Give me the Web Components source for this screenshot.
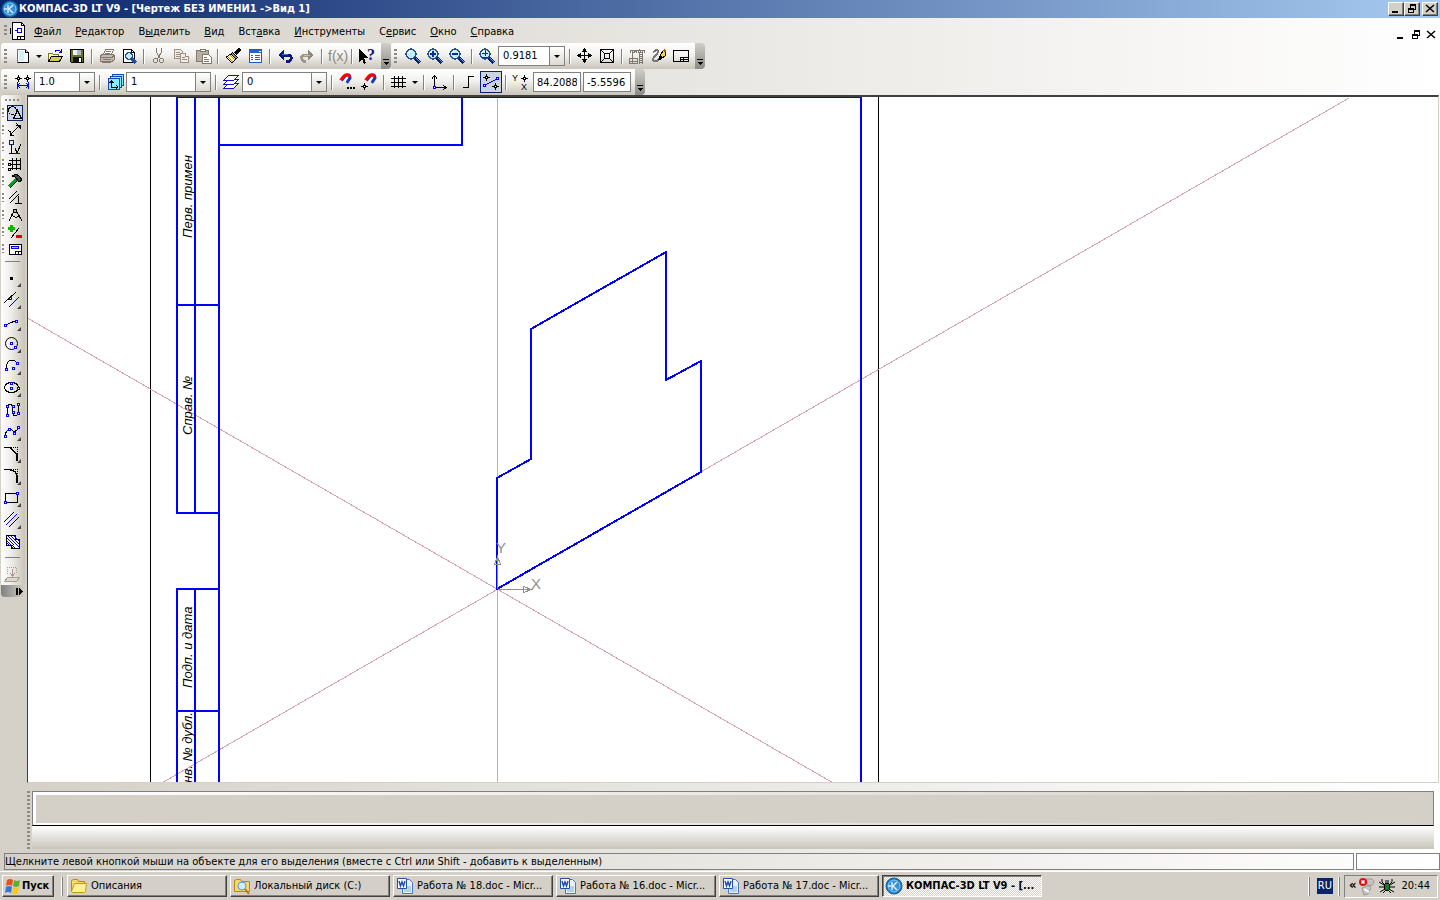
<!DOCTYPE html>
<html lang="ru">
<head>
<meta charset="utf-8">
<title>КОМПАС-3D LT V9</title>
<style>
  :root {
    --face: #d4d0c8;
    --shadow: #808080;
    --dark: #404040;
    --navy: #0a246a;
    --bar: linear-gradient(#ffffff, #f3f2ef 45%, #c9c5bb);
    --window: linear-gradient(90deg, #d4d0c8, #ffffff);
  }
  body {
    margin: 0;
    font: 11px/14px "DejaVu Sans Condensed", "DejaVu Sans", sans-serif;
    color: #000;
  }
</style>
</head>
<body>
<cad-window></cad-window>

<script>
/**
 * Icon set, each drawn on an 18x18 grid
 */
const LENS = `<path d="M11 11l5 5" stroke="#0a246a" stroke-width="3"/><path d="M12 11l4 4" stroke="#5aa0e0"/>
  <circle cx="7" cy="7" r="5" fill="#c4ecff" stroke="#24508c" stroke-width="1.5"/><path d="M4 6q1-2 3-2" stroke="#fff"/>`;
const node = (x, y) => `<rect x="${x - 1}.5" y="${y - 1}.5" width="2" height="2" fill="#fff" stroke="#00f"/>`;
const PLUS = (x, y) => `<path d="M${x - 3} ${y}.5h7M${x}.5 ${y - 3}v7"/><path fill="#fff" d="M${x - 1}.5 ${y - 1}.5h2v2h-2z"/>`;

const ICONS = {
  kompas: `<g shape-rendering="auto"><circle cx="9" cy="9" r="8" fill="#1878c0" stroke="#0e5c9c"/>
    <circle cx="9" cy="9" r="6" fill="#3492d8" stroke="#8cc8f4"/>
    <path d="M7 5v8M12 5L8 9l4 4M3 9h3" stroke="#d8f0ff" stroke-width="1.5"/></g>`,
  sheet: `<path d="M3.5.5h9l3 3v14h-12z" fill="#fff"/><path d="M12.5.5v3h3"/><path d="M5.5 8.5h3m4-2v4m-4-4h4v4h-4z" stroke="#00f"/>
    <path d="M1.5 6v6M8.5 17v-3h7M11.5 14.5v2"/>`,
  new: `<path d="M3.5 2.5h8l3 3v10h-11z" fill="#f6fbff" stroke="#6e6e6e"/><path d="M11.5 2.5v3h3v10h-11"/><path d="M5 4h5v10H5z" fill="#d6eef8" stroke="none"/>`,
  open: `<path d="M2.5 14.5v-8h4l1 1h5v2" fill="#fff6a8" stroke="#77742c"/><path d="M2.5 14.5l3-5h11l-3 5z" fill="#d0ce50"/>
    <path d="M9 4.5q3-3 6 0M15.5 2v3h-3" stroke="#00f"/>`,
  save: `<path d="M2.5 2.5h13v13h-12l-1-1z" fill="#6c7024"/><path d="M5 3h8v5H5z" fill="#e8f4ff" stroke="none"/>
    <path d="M9 3h4v5H9z" fill="#a8b8c8" stroke="none"/><path d="M5 10h9v5H5z" fill="#111" stroke="none"/><path d="M11 11h2v4h-2z" fill="#fff" stroke="none"/>`,
  print: `<g stroke="#80786e"><path d="M5.5 7.5l2-5h8l-2 5" fill="#fff"/><path d="M8 4.5h5M7 6.5h5"/><path d="M2.5 8.5l2-1h11l1 1v4l-2 2h-12z" fill="#c4bbb0"/>
    <path d="M3 10.5h11l2-2M5 12.5h8M4.5 14.5v1h8l2-2"/></g>`,
  preview: `<path d="M3.5 2.5h8l3 3v10h-11z" fill="#fff"/><path d="M11.5 2.5v3h3"/><circle cx="9" cy="9" r="3.5" fill="#c4ecff" stroke="#24508c" stroke-width="1.5"/>
    <path d="M12 12l4 4" stroke="#1c50a0" stroke-width="3"/>`,
  cut: `<g stroke="#80786e"><path d="M6.5 1v4l4 7M11.5 1v4l-4 7"/><circle cx="5.5" cy="13.5" r="2"/><circle cx="11.5" cy="13.5" r="2"/></g>`,
  copy: `<g stroke="#9a9086" fill="#f0ece6"><path d="M2.5 2.5h6l2 2v7h-8z"/><path d="M4 5.5h4M4 7.5h5M4 9.5h5"/>
    <path d="M8.5 6.5h5l3 3v6h-8z"/><path d="M13.5 6.5v3h3M10 10.5h3M10 12.5h5"/></g>`,
  paste: `<g stroke="#80786e"><path d="M2.5 3.5h12v11h-12z" fill="#b8aea2"/><path d="M6 4.5v-2h5v2z" fill="#fff"/>
    <path d="M8.5 7.5h6l3 3v6h-9z" fill="#fff"/><path d="M10 10.5h3M10 12.5h5M10 14.5h5"/></g>`,
  brush: `<path d="M11 7l5-5" stroke-width="3"/><path d="M8.5 5.5l5 5-2 2-5-5z" fill="#888"/>
    <path d="M7 7l-5 3 6 6 4-4z" fill="#fff0a0"/><path d="M4 10l5 5M6 8l5 5" stroke="#a09020"/>`,
  props: `<path d="M3.5 2.5h12v13h-12z" fill="#fff" stroke="#2458b4"/><path d="M3 3h13v3H3z" fill="#2464c8" stroke="none"/>
    <path d="M5 8.5h2M9 8.5h5M5 10.5h2M9 10.5h5M5 12.5h2M9 12.5h5" stroke="#3068c0"/><path d="M13 4h2v1h-2z" fill="#fff" stroke="none"/>`,
  undo: `<path d="M6 8h6q4 0 3 4-1 3-5 3" stroke="#0a1880" stroke-width="3"/><path d="M8 2v11L2 8z" fill="#0a1880" stroke="none"/><path d="M6 7h6" stroke="#2878d8"/>`,
  redo: `<path d="M12 8H7q-4 0-3 4 1 3 4 3" stroke="#a0968c" stroke-width="3"/><path d="M10 3v10l6-5z" fill="#90877c" stroke="none"/><path d="M6 8.5h6" stroke="#c8c0b4"/>`,
  func: `<text x="0" y="14" font-size="14" fill="#90877c" stroke="none" font-family="Liberation Sans Narrow, Liberation Sans, sans-serif">f(x)</text>`,
  help: `<path d="M1 2v13l3-3 2 5 2-1-2-5h4z" fill="#000" stroke="none"/><text x="9" y="13" font-size="16" font-weight="700" fill="#12127a" stroke="none" font-family="Liberation Serif, serif">?</text>`,
  lens: LENS,
  zoomin: LENS + `<path d="M4 7h6M7 4v6" stroke="#1428a0" stroke-width="1.5"/>`,
  zoomout: LENS + `<path d="M4 7h6" stroke="#1428a0" stroke-width="1.5"/>`,
  zoomany: LENS + `<path d="M4 6h6M7 3v6M4 10h6" stroke="#1428a0"/>`,
  pan: `<path d="M8.5 2v14M2 8.5h14"/><path d="M8.5 1l3 4h-6zM8.5 16l3-4h-6zM1 8.5l4-3v6zM16 8.5l-4-3v6z" fill="#000" stroke="none"/>`,
  fit: `<path d="M2.5 2.5h13v13h-13zM6.5 6.5h5v5h-5zM3 3l4 4M15 3l-4 4M3 15l4-4M15 15l-4-4"/>`,
  crane: `<g stroke="#80786e"><path d="M1.5 11.5h8v5h-8zM4.5 11v6M1 14.5h8M4.5 8v3M4.5 8.5v-3l8-3M3 3.5h13M11.5 5v12M14.5 5v12"/>
    <path d="M2 4h15M13 5v12" stroke-width="3" stroke-dasharray="1 1"/></g>`,
  sketch: `<path d="M3 5q6-4 5 0-1 3-4 5-3 4 1 4 4 0 4-3" stroke="#777" stroke-width="2"/><path d="M9 12l2-5 3-4 2 1-1 5-4 3z" fill="#ffd828"/><path d="M9 12l3-1-1-2z" fill="#000"/><path d="M14 3l2 2" stroke="#c04800" stroke-width="2"/>`,
  frame: `<path d="M1.5 3.5h15v11h-15zM8.5 14v-4h8M9 12.5h7M11.5 10.5v4"/>`,
  step: `${PLUS(4, 5)}${PLUS(13, 5)}<path d="M3.5 9v7M14.5 9v7M4 12.5h10M6 10l-2 2.5 2 2.5M12 10l2 2.5-2 2.5" stroke="#00f"/>`,
  views: `<g fill="#88ecff" stroke="#1848c0"><path d="M6.5 1.5h11v11h-11z"/><path d="M4.5 3.5h11v11h-11z"/><path d="M2.5 5.5h11v11h-11z"/></g>
    <path d="M5.5 9v5h6M3.5 10l2-2 2 2M10 12l2 2-2 2"/>`,
  layers: `<g fill="#fff" stroke="#1010c0"><path d="M1.5 15.5l5-5h10l-5 5z"/><path d="M1.5 11.5l5-5h10l-5 5z"/><path d="M1.5 7.5l5-5h10l-5 5z"/></g>`,
  magnet: `<g shape-rendering="auto"><path d="M3 8L7 3Q12 0 12 5L8 11" stroke="#1838b8" stroke-width="3"/><path d="M2 8L6 3Q9 0 12 4" stroke="#f00" stroke-width="3"/>
    <path d="M1 7l4 3M6 9l4 3" stroke="#e8e8e8" stroke-width="2"/></g><path d="M9 15h2M12 15h2M15 15h2" stroke-width="2"/>`,
  magnet2: `<g shape-rendering="auto"><path d="M6 8L10 3Q15 0 15 5L11 11" stroke="#1838b8" stroke-width="3"/><path d="M5 8L9 3Q12 0 15 4" stroke="#f00" stroke-width="3"/>
    <path d="M4 7l4 3M9 9l4 3" stroke="#e8e8e8" stroke-width="2"/></g>${PLUS(4, 13)}`,
  grid: `<path d="M4.5 3v12M8.5 3v12M12.5 3v12M1 5.5h15M1 9.5h15M1 13.5h15"/>`,
  lcs: `<path d="M4.5 3v12M4 14.5h12M2 5.5l2.5-3 2.5 3M13 12l3 2.5-3 2.5"/>${node(4, 14)}`,
  ortho: `<path d="M3 14.5h5.5v-11H14"/>`,
  round: `<path d="M2 12.5L16 5.5" stroke="#00f"/>${PLUS(4, 4)}${PLUS(13, 13)}${node(2, 12)}${node(15, 5)}`,
  yx: `<g fill="#000" stroke="none" font-size="9"><text x="0" y="8">Y</text><text x="9" y="17">X</text></g>${PLUS(12, 5)}`,
  geometry: `<circle cx="6.5" cy="6.5" r="4"/><path d="M7.5 14.5h8l-4-8z"/>`,
  dims: `<path d="M4 14L14 4M2.5 9.5l5 6M10.5 2.5l5 6M4 10v4h4M10 4h4v4"/>`,
  marks: `<path d="M3.5 2.5h4v4h-4z" stroke="#0a246a"/><path d="M5.5 7v8M3 15.5h5M9 10l2 5 4-9"/><path d="M8 15.5h6" stroke="#00f"/>`,
  build: `<path d="M3 5.5h12M3 9.5h12M3 13.5h12M6.5 3v12M10.5 3v12M14.5 3v12"/><path d="M2.5 8.5h2v2h-2zM2.5 13.5h2v2h-2z" fill="#fff"/>`,
  hammer: `<path d="M3 15l8-8" stroke="#00a020" stroke-width="3"/><path d="M4 16l8-8"/><path d="M6 4q6-4 10 4l-3 2-4-5z" fill="#444"/>`,
  parallel: `<path d="M3 10l8-8M4 14L13 5M12.5 7v8M9 14.5h7"/>`,
  compass: `<path d="M9 3L3 15M9 3l7 12M5 8q4 6 9 1"/><circle cx="9" cy="5" r="2" fill="#aaa"/>`,
  plusminus: `<path d="M5.5 2v7M2 5.5h7" stroke="#00b800" stroke-width="3"/><path d="M5 15l8-10"/><path d="M10 13h6" stroke="#e00000" stroke-width="3"/>`,
  spec: `<path d="M3.5 4.500h12v10h-12z" fill="#fff"/><path d="M5.5 6.5h7v2h-7z" fill="#a8c8ff" stroke="#00f"/><path d="M9.500 14v-3h6M12.5 11v3"/>`,
  point: `<circle cx="8.5" cy="9.5" r="1" fill="#000"/>`,
  pline: `<path d="M1 12L13 1"/><path d="M6 16L16 6" stroke="#00f"/>${node(7, 7)}`,
  segment: `<path d="M3 12L14 7"/>${node(2, 12)}${node(13, 8)}`,
  circle: `<circle cx="8.5" cy="8.5" r="6" shape-rendering="auto"/>${node(8, 8)}${node(12, 12)}`,
  arc: `<path d="M3 12q0-8 6-9 4 0 5 4"/>${node(3, 12)}${node(14, 6)}${node(10, 11)}`,
  ellipse: `<ellipse cx="8.5" cy="8.5" rx="7" ry="5"/>${node(8, 4)}${node(8, 9)}${node(15, 9)}`,
  nurbs: `<path d="M4.5 14V5q2-4 5 0v7q2 6 6 0V4"/>${node(4, 5)}${node(4, 14)}${node(10, 5)}${node(10, 11)}${node(15, 3)}${node(15, 12)}`,
  spline: `<path d="M2 12q1-4 5-6 2 0 4 3l3-2V4"/>${node(2, 13)}${node(6, 6)}${node(11, 10)}${node(15, 4)}`,
  chamfer: `<path d="M1 2.500h6l7 7v6" stroke-width="1.5"/><path d="M8 2.500h6.500v8" stroke-dasharray="1 1"/>`,
  fillet: `<path d="M1 2.500h5q8 1 8 7v6" stroke-width="1.5"/><path d="M8 2.500h6.500v8" stroke-dasharray="1 1"/>`,
  rect: `<path d="M2.5 4.5h12v9h-12z"/>${node(2, 13)}${node(14, 4)}`,
  equid: `<path d="M1 11L11 1M6 16L16 6"/><path d="M3 14L14 3" stroke="#00f"/>`,
  hatch: `<path d="M3.5 2.5h9v4h4v9h-8v-3h-5z" fill="#fff" stroke="none"/><path d="M4 5l7 7M4 8l4 4M4 10l2 2M5 3l11 11M8 3l8 8M11 3l5 5M9 12l3 3M9 14l1 1" stroke="#00c"/><path d="M3.5 2.5h9v4h4v9h-8v-3h-5z"/>`,
  project: `<g stroke="#a89c90"><path d="M4.500 9V2.5h9V9" stroke-dasharray="1 1"/><path d="M9.5 4v6M7 8l2.5 3L12 8"/><path d="M1.5 16.5l3-4h12l-3 4z" fill="#e0d8cc"/></g>`,
  flag: `<g shape-rendering="auto" stroke="none"><path d="M3 3q3-2 6 0L8 9Q5 7 2 9z" fill="#e8501c"/><path d="M10 3q3 2 6 0l-1 6q-3 2-6 0z" fill="#5cb030"/>
    <path d="M2 10q3-2 6 0l-1 6q-3-2-6 0z" fill="#3078e0"/><path d="M9 10q3 2 6 0l-1 6q-3 2-6 0z" fill="#f8c820"/></g>`,
  folder: `<g shape-rendering="auto"><path d="M1.5 14.5v-11l2-1h4l1 2h6v3" fill="#f8d868" stroke="#b88810"/><path d="M1.5 14.5l3-8h12l-1 8-1 1h-12z" fill="#fff09c" stroke="#c89818"/></g>`,
  search: `<g shape-rendering="auto"><path d="M1.5 14.5v-11l2-1h4l1 2h8v10z" fill="#f8d868" stroke="#b88810"/><circle cx="9" cy="9" r="4" fill="#c8f0ff" stroke="#5898d0"/><path d="M12 12l4 5" stroke="#b07820" stroke-width="2"/></g>`,
  word: `<g shape-rendering="auto"><path d="M6.5 2.5h7l3 3v11h-10z" fill="#e8f0ff" stroke="#4878b8"/><path d="M8 10h7M8 12h7M8 14h7" stroke="#88a8d8"/>
    <path d="M1.5 1.5h9v10h-9z" fill="#fff" stroke="#2450a0"/><path d="M3 4l1.5 5L6 5l1.5 4L9 4" stroke="#1c50b8" stroke-width="1.5"/></g>`,
  offline: `<g shape-rendering="auto"><path d="M8 2h6q4 3 0 6l-4 1zM4 11l7-3 2 3-3 6-4 1z" fill="#c4c4c4" stroke="#999"/><path d="M6 12l5 3" stroke="#fff" stroke-width="2"/>
    <circle cx="5" cy="5" r="4" fill="#e01010" stroke="none"/><path d="M3.5 3.5l3 3M6.5 3.5l-3 3" stroke="#fff" stroke-width="1.5"/></g>`,
  spider: `<path d="M7 8L4 5V2M11 8l3-3V2M6 8L1 5M12 8l5-3M6 10H1M12 10h5M7 12l-5 3M11 12l5 3M8 13l-3 3M10 13l3 3M8 6V3M10 6V3" shape-rendering="auto"/><ellipse cx="9" cy="10" rx="3" ry="4" fill="#108020"/>`,
  min: `<path d="M5 12h6" stroke-width="2"/>`,
  restore: `<path d="M7 5h6M5 9h6" stroke-width="2"/><path d="M7.5 4v4M12.5 4v5.5H11M5.5 8v4.5h5V8"/>`,
  close: `<path d="M5 5l8 7M13 5l-8 7" stroke-width="1.5" shape-rendering="auto"/>`
};

const makeIcon = (name) => {
  const icon = document.createElement("cad-icon");
  icon.setAttribute("name", name);
  return icon;
};

const define = (name, markup, ready) => {
  const t = document.createElement("template");
  t.innerHTML = markup;
  customElements.define(name, class extends HTMLElement {
    constructor() {
      super();
      this.attachShadow({ mode: "open" });
      this.shadowRoot.appendChild(t.content.cloneNode(true));
    }

    connectedCallback() {
      if (ready) ready(this, this.shadowRoot);
    }
  });
};

define("cad-icon", `
  <style>
    :host { display: block; width: 18px; height: 18px; flex: none; }
    svg { display: block; overflow: visible; }
  </style>
  <svg width="18" height="18" viewBox="0 0 18 18" fill="none" stroke="#000" shape-rendering="crispEdges" aria-hidden="true"></svg>
`, (el, root) => {
  root.querySelector("svg").innerHTML = ICONS[el.getAttribute("name")];
});

// Square toolbar button, icon by name, "active" when pressed
define("tool-button", `
  <style>
    :host { display: block; flex: none; }
    button {
      display: grid;
      place-content: center;
      box-sizing: border-box;
      width: 22px;
      height: 22px;
      padding: 0;
      border: 1px solid transparent;
      background: none;
    }
    :host([active]) button { border-color: var(--navy); background: #ccd4e4; }
  </style>
  <button type="button"></button>
`, (el, root) => {
  const button = root.querySelector("button");
  button.setAttribute("aria-label", el.getAttribute("icon"));
  button.replaceChildren(makeIcon(el.getAttribute("icon")));
});

define("tool-arrow", `
  <style>
    :host { display: grid; place-items: center; width: 10px; flex: none; }
    button { padding: 8px 2px; border: 0; background: none; }
    i { display: block; border: 3px solid transparent; border-top-color: #000; border-bottom: 0; }
  </style>
  <button type="button" aria-label="Список"><i></i></button>
`);

define("tool-separator", `
  <style>
    :host { display: block; flex: none; width: 1px; height: 15px; margin: 0 3px; background: var(--shadow); border-right: 1px solid #fff; }
  </style>
`);

define("tool-combo", `
  <style>
    :host { display: block; flex: none; margin-right: 1px; }
    label { display: grid; grid-template-columns: 1fr 15px; height: 20px; box-sizing: border-box; border: 1px solid var(--shadow); background: #fff; }
    select {
      grid-area: 1 / 1 / 2 / 3;
      appearance: none;
      min-width: 0;
      padding: 0 4px;
      border: 0;
      border-radius: 0;
      background: none;
      color: #000;
      font: inherit;
    }
    span { grid-area: 1 / 2; display: grid; place-items: center; border-left: 1px solid var(--shadow); background: linear-gradient(#fff, #ddd9d0); pointer-events: none; }
    i { border: 3px solid transparent; border-top-color: #000; border-bottom: 0; }
  </style>
  <label><select></select><span><i></i></span></label>
`, (el, root) => {
  const select = root.querySelector("select");
  select.add(new Option(el.getAttribute("value")));
  select.setAttribute("aria-label", el.getAttribute("label"));
});

define("coord-field", `
  <style>
    :host { display: block; flex: none; width: 48px; margin: 0 1px; }
    input { display: block; box-sizing: border-box; width: 100%; height: 20px; padding: 0 3px; border: 1px solid var(--shadow); background: #fff; font: inherit; color: #000; }
  </style>
  <input type="text">
`, (el, root) => {
  const input = root.querySelector("input");
  input.value = el.getAttribute("value");
  input.setAttribute("aria-label", el.getAttribute("label"));
});

define("tool-bar", `
  <style>
    :host { display: flex; height: 26px; flex: none; }
    .strip { display: flex; align-items: center; padding-right: 3px; border-radius: 3px 0 0 3px; background: var(--bar); }
    .grip { width: 3px; height: 15px; margin: 0 5px 0 3px; background: repeating-linear-gradient(#8c8a86 0 2px, transparent 2px 4px); }
    .more {
      display: grid;
      align-items: end;
      justify-items: center;
      width: 10px;
      padding: 0 0 3px;
      border: 0;
      border-radius: 0 4px 4px 0;
      background: linear-gradient(#d0cec8, #8c8a86);
    }
  </style>
  <div class="strip"><div class="grip"></div><slot></slot></div>
  <button class="more" type="button" aria-label="Параметры панели">
    <svg width="8" height="7" fill="#000" shape-rendering="crispEdges"><path d="M1 0h6v1H1zM1 3h6L4 6z"/></svg>
  </button>
`);

define("title-bar", `
  <style>
    :host { display: flex; align-items: center; height: 18px; padding: 0 2px 0 1px; background: linear-gradient(90deg, #0a246a, #a6caf0); color: #fff; font-weight: 700; }
    h1 { flex: 1; margin: 0; font: inherit; }
    button { display: grid; place-content: center; box-sizing: border-box; width: 16px; height: 14px; padding: 0; border: 1px solid; border-color: #fff var(--dark) var(--dark) #fff; background: var(--face); box-shadow: inset -1px -1px var(--shadow); overflow: hidden; }
    button:last-child { margin-left: 2px; }
  </style>
  <cad-icon name="kompas"></cad-icon>
  <h1><slot></slot></h1>
  <button type="button" aria-label="Свернуть"><cad-icon name="min"></cad-icon></button>
  <button type="button" aria-label="Восстановить"><cad-icon name="restore"></cad-icon></button>
  <button type="button" aria-label="Закрыть"><cad-icon name="close"></cad-icon></button>
`);

define("menu-bar", `
  <style>
    :host { display: flex; align-items: center; height: 25px; padding: 0 2px 0 4px; }
    .grip { width: 3px; height: 11px; margin-right: 2px; background: repeating-linear-gradient(#8c8a86 0 2px, transparent 2px 4px); }
    nav { display: flex; flex: 1; }
    button { padding: 2px 7px 0; border: 0; background: none; font: inherit; color: #000; }
    .mdi { display: grid; place-content: center; width: 15px; height: 14px; padding: 0; margin-top: 8px; }
  </style>
  <div class="grip"></div>
  <cad-icon name="sheet"></cad-icon>
  <nav>
    <button type="button"><u>Ф</u>айл</button>
    <button type="button"><u>Р</u>едактор</button>
    <button type="button">В<u>ы</u>делить</button>
    <button type="button"><u>В</u>ид</button>
    <button type="button">Вст<u>а</u>вка</button>
    <button type="button"><u>И</u>нструменты</button>
    <button type="button">С<u>е</u>рвис</button>
    <button type="button"><u>О</u>кно</button>
    <button type="button"><u>С</u>правка</button>
  </nav>
  <button class="mdi" type="button" aria-label="Свернуть лист"><cad-icon name="min"></cad-icon></button>
  <button class="mdi" type="button" aria-label="Восстановить лист"><cad-icon name="restore"></cad-icon></button>
  <button class="mdi" type="button" aria-label="Закрыть лист"><cad-icon name="close"></cad-icon></button>
`);

define("tool-palette", `
  <style>
    :host { display: flex; flex-direction: column; width: 24px; flex: none; margin: 0 2px 0 1px; align-self: start; }
    .body { padding-top: 4px; background: linear-gradient(90deg, #fff, #f0eeea 40%, #c8c4ba); border-radius: 3px 3px 0 0; }
    .grip { width: 15px; height: 2px; margin: 0 0 3px 4px; background: repeating-linear-gradient(90deg, #8c8a86 0 2px, transparent 2px 4px); }
    button { position: relative; display: grid; place-content: center; box-sizing: border-box; padding: 0; border: 1px solid transparent; background: none; }
    .set { display: flex; align-items: center; height: 17px; }
    .set::before { content: ""; width: 2px; height: 9px; margin: 0 3px 0 1px; background: repeating-linear-gradient(#8c8a86 0 2px, transparent 2px 4px); }
    .set button { width: 16px; height: 16px; }
    .set[active] button { border-color: var(--navy); background: #ccd4e4; }
    .tool { width: 22px; height: 22px; }
    .tool.more::after { content: ""; position: absolute; right: 1px; bottom: 1px; border: 2px solid #444; border-left-color: transparent; border-top-color: transparent; }
    hr { width: 15px; height: 1px; margin: 4px 0 5px 4px; border: 0; background: var(--shadow); }
    .foot { display: flex; align-items: center; justify-content: flex-end; height: 12px; padding-right: 1px; border-radius: 0 0 4px 4px; background: linear-gradient(90deg, #808080, #d4d0c8); }
  </style>
  <div class="body">
    <div class="grip"></div>
    <div class="sets"></div>
    <hr>
    <div class="tools"></div>
    <hr>
    <button class="tool" type="button" aria-label="Проекция"><cad-icon name="project"></cad-icon></button>
  </div>
  <div class="foot"><svg width="8" height="7" fill="#000" shape-rendering="crispEdges"><path d="M0 0h2v7H0zM3 0l4 3.5L3 7z"/></svg></div>
`, (el, root) => {
  root.querySelector(".sets").innerHTML = el.getAttribute("sets").split(" ").map((name, i) =>
    `<div class="set"${i ? "" : " active"}><button type="button" aria-label="${name}"><cad-icon name="${name}"></cad-icon></button></div>`).join("");
  root.querySelector(".tools").innerHTML = el.getAttribute("tools").split(" ").map(name =>
    `<button class="tool${name == "hatch" || name == "nurbs" ? "" : " more"}" type="button" aria-label="${name}"><cad-icon name="${name}"></cad-icon></button>`).join("");
});

define("drawing-view", `
  <style>
    :host { display: block; flex: 1; min-width: 0; overflow: hidden; background: #fff; border: 1px solid #d4d0c8; border-top: 2px solid #404040; border-left: 1px solid #404040; }
    svg { display: block; width: 100%; height: 100%; }
    .thin { stroke: #000; }
    .main { stroke: #00f; stroke-width: 2; }
    .guide { stroke: #d8a0b8; }
    .axis { stroke: #909090; }
    .stamp { font: italic 13px "Liberation Sans Narrow", "Liberation Sans", sans-serif; fill: #000; }
    .letter { font: 15px "Liberation Sans", sans-serif; fill: #909090; }
  </style>
  <svg fill="none" shape-rendering="crispEdges">
    <!-- origin of the sheet relative to the view -->
    <g transform="translate(-28 -97)">
      <path class="thin" d="M150.5 97V2000M878.5 97V2000"/>
      <path class="guide" d="M497.5 97V2000M-23 289L1017 889M-22 889L1349 98"/>
      <path class="main" d="M177 97V513M177 589V2000M195 97V513M195 589V2000M219 97V2000M176 97H862M861 97V2000"/>
      <path class="main" d="M177 305H219M176 513H219M176 589H219M177 711H219M219 145H463M462 97V145"/>
      <path class="main" d="M497 589V478L531 459V329L666 252V380L701 361V472z"/>
      <path class="axis" d="M497.5 589V556M494.5 564.5h6l-3-8zM498 589.5H532M523.5 586.5v6l8-3z"/>
      <text class="letter" x="496" y="553">Y</text>
      <text class="letter" x="531" y="589">X</text>
      <g class="stamp">
        <text transform="translate(192 238) rotate(-90)">Перв. примен</text>
        <text transform="translate(192 435) rotate(-90)">Справ. №</text>
        <text transform="translate(192 688) rotate(-90)">Подп. и дата</text>
        <text transform="translate(192 792) rotate(-90)">Инв. № дубл.</text>
      </g>
    </g>
  </svg>
`);

define("property-panel", `
  <style>
    :host { display: flex; gap: 2px; height: 58px; padding: 8px 6px 4px 27px; }
    .grip { width: 3px; background: repeating-linear-gradient(#8c8a86 0 2px, transparent 2px 4px); }
    .panel { flex: 1; display: flex; flex-direction: column; }
    .page { border: 1px solid var(--shadow); border-bottom: 1px solid #000; padding: 3px 0 2px 3px; background: linear-gradient(90deg, #fff, #d4d0c8); }
    .page div { height: 28px; background: var(--face); }
    .tabs { flex: 1; background: linear-gradient(#fff, #c9c5bb); }
  </style>
  <div class="grip"></div>
  <div class="panel"><div class="page"><div></div></div><div class="tabs"></div></div>
`);

define("status-bar", `
  <style>
    :host { display: flex; gap: 2px; height: 18px; padding-left: 4px; }
    div { box-sizing: border-box; height: 17px; border: 1px solid var(--shadow); padding-top: 1px; }
    .message { flex: 1; }
    .extra { width: 84px; }
  </style>
  <div class="message"><slot></slot></div>
  <div class="extra"></div>
`);

define("task-button", `
  <style>
    :host { display: block; flex: 0 1 160px; min-width: 0; }
    button {
      display: flex;
      align-items: center;
      gap: 3px;
      box-sizing: border-box;
      width: 100%;
      height: 22px;
      padding: 0 4px 0 2px;
      border: 1px solid;
      border-color: #fff var(--dark) var(--dark) #fff;
      box-shadow: inset -1px -1px var(--shadow);
      background: var(--face);
      color: #000;
      font: inherit;
      text-align: left;
    }
    span { overflow: hidden; white-space: nowrap; text-overflow: ellipsis; }
    :host([active]) button {
      border-color: var(--dark) #fff #fff var(--dark);
      box-shadow: inset 1px 1px var(--shadow);
      background: repeating-conic-gradient(#fff 0 25%, #d4d0c8 0 50%) 0 0 / 2px 2px;
      font-weight: 700;
    }
    :host([start]) { flex: 0 0 52px; }
    :host([start]) button { gap: 0; padding: 0 1px; font-weight: 700; }
  </style>
  <button type="button"><span><slot></slot></span></button>
`, (el, root) => {
  root.querySelector("button").prepend(makeIcon(el.getAttribute("icon")));
});

define("task-bar", `
  <style>
    :host { display: flex; align-items: center; gap: 3px; box-sizing: border-box; height: 29px; padding: 0 2px; border-top: 1px solid #fff; background: var(--face); }
    .split { flex: none; width: 1px; height: 19px; margin: 0 1px 0 4px; background: #fff; border-right: 1px solid var(--shadow); }
    .space { flex: 1; }
    .lang { padding: 1px; margin: 0 -2px 0 3px; background: var(--navy); color: #fff; }
    .tray { display: flex; align-items: center; gap: 2px; box-sizing: border-box; height: 23px; padding: 0 7px 0 4px; border: 1px solid; border-color: var(--shadow) #fff #fff var(--shadow); }
    button { padding: 0 0 2px; border: 0; background: none; font: 700 13px/14px "DejaVu Sans Condensed", sans-serif; }
    time { margin-left: 3px; }
  </style>
  <task-button start icon="flag">Пуск</task-button>
  <div class="split"></div>
  <slot></slot>
  <div class="space"></div>
  <div class="split"></div>
  <span class="lang">RU</span>
  <div class="split"></div>
  <div class="tray">
    <button type="button" aria-label="Показать значки">«</button>
    <cad-icon name="offline"></cad-icon>
    <cad-icon name="spider"></cad-icon>
    <time>20:44</time>
  </div>
`);

define("cad-window", `
  <style>
    :host { display: flex; flex-direction: column; height: 100vh; background: var(--window); }
    .bars { display: flex; padding-left: 1px; }
    .work { display: flex; flex: 1; min-height: 0; margin-right: 1px; }
    .zoom { width: 67px; }
    .step { width: 61px; }
    .wide { width: 85px; }
    property-panel { box-sizing: content-box; }
  </style>
  <title-bar>КОМПАС-3D LT V9 - [Чертеж БЕЗ ИМЕНИ1 -&gt;Вид 1]</title-bar>
  <menu-bar></menu-bar>
  <div class="bars">
    <tool-bar>
      <tool-button icon="new"></tool-button><tool-arrow></tool-arrow>
      <tool-button icon="open"></tool-button>
      <tool-button icon="save"></tool-button>
      <tool-separator></tool-separator>
      <tool-button icon="print"></tool-button>
      <tool-button icon="preview"></tool-button>
      <tool-separator></tool-separator>
      <tool-button icon="cut"></tool-button>
      <tool-button icon="copy"></tool-button>
      <tool-button icon="paste"></tool-button>
      <tool-separator></tool-separator>
      <tool-button icon="brush"></tool-button>
      <tool-button icon="props"></tool-button>
      <tool-separator></tool-separator>
      <tool-button icon="undo"></tool-button>
      <tool-button icon="redo"></tool-button>
      <tool-separator></tool-separator>
      <tool-button icon="func"></tool-button>
      <tool-separator></tool-separator>
      <tool-button icon="help"></tool-button>
    </tool-bar>
    <tool-bar>
      <tool-button icon="lens"></tool-button>
      <tool-button icon="zoomin"></tool-button>
      <tool-button icon="zoomout"></tool-button>
      <tool-separator></tool-separator>
      <tool-button icon="zoomany"></tool-button>
      <tool-combo class="zoom" value="0.9181" label="Масштаб"></tool-combo>
      <tool-separator></tool-separator>
      <tool-button icon="pan"></tool-button>
      <tool-button icon="fit"></tool-button>
      <tool-separator></tool-separator>
      <tool-button icon="crane"></tool-button>
      <tool-button icon="sketch"></tool-button>
      <tool-button icon="frame"></tool-button>
    </tool-bar>
  </div>
  <div class="bars">
    <tool-bar>
      <tool-button icon="step"></tool-button>
      <tool-combo class="step" value="1.0" label="Шаг курсора"></tool-combo>
      <tool-separator></tool-separator>
      <tool-button icon="views"></tool-button>
      <tool-combo class="wide" value="1" label="Вид"></tool-combo>
      <tool-separator></tool-separator>
      <tool-button icon="layers"></tool-button>
      <tool-combo class="wide" value="0" label="Слой"></tool-combo>
      <tool-separator></tool-separator>
      <tool-button icon="magnet"></tool-button>
      <tool-button icon="magnet2"></tool-button>
      <tool-separator></tool-separator>
      <tool-button icon="grid"></tool-button><tool-arrow></tool-arrow>
      <tool-separator></tool-separator>
      <tool-button icon="lcs"></tool-button>
      <tool-separator></tool-separator>
      <tool-button icon="ortho"></tool-button>
      <tool-button icon="round" active></tool-button>
      <tool-separator></tool-separator>
      <tool-button icon="yx"></tool-button>
      <coord-field value="84.2088" label="X"></coord-field>
      <coord-field value="-5.5596" label="Y"></coord-field>
    </tool-bar>
  </div>
  <div class="work">
    <tool-palette
      sets="geometry dims marks build hammer parallel compass plusminus spec"
      tools="point pline segment circle arc ellipse nurbs spline chamfer fillet rect equid hatch"></tool-palette>
    <drawing-view></drawing-view>
  </div>
  <property-panel></property-panel>
  <status-bar>Щелкните левой кнопкой мыши на объекте для его выделения (вместе с Ctrl или Shift - добавить к выделенным)</status-bar>
  <task-bar>
    <task-button icon="folder">Описания</task-button>
    <task-button icon="search">Локальный диск (C:)</task-button>
    <task-button icon="word">Работа № 18.doc - Micr...</task-button>
    <task-button icon="word">Работа № 16.doc - Micr...</task-button>
    <task-button icon="word">Работа № 17.doc - Micr...</task-button>
    <task-button icon="kompas" active>КОМПАС-3D LT V9 - [...</task-button>
  </task-bar>
`);
</script>
</body>
</html>
